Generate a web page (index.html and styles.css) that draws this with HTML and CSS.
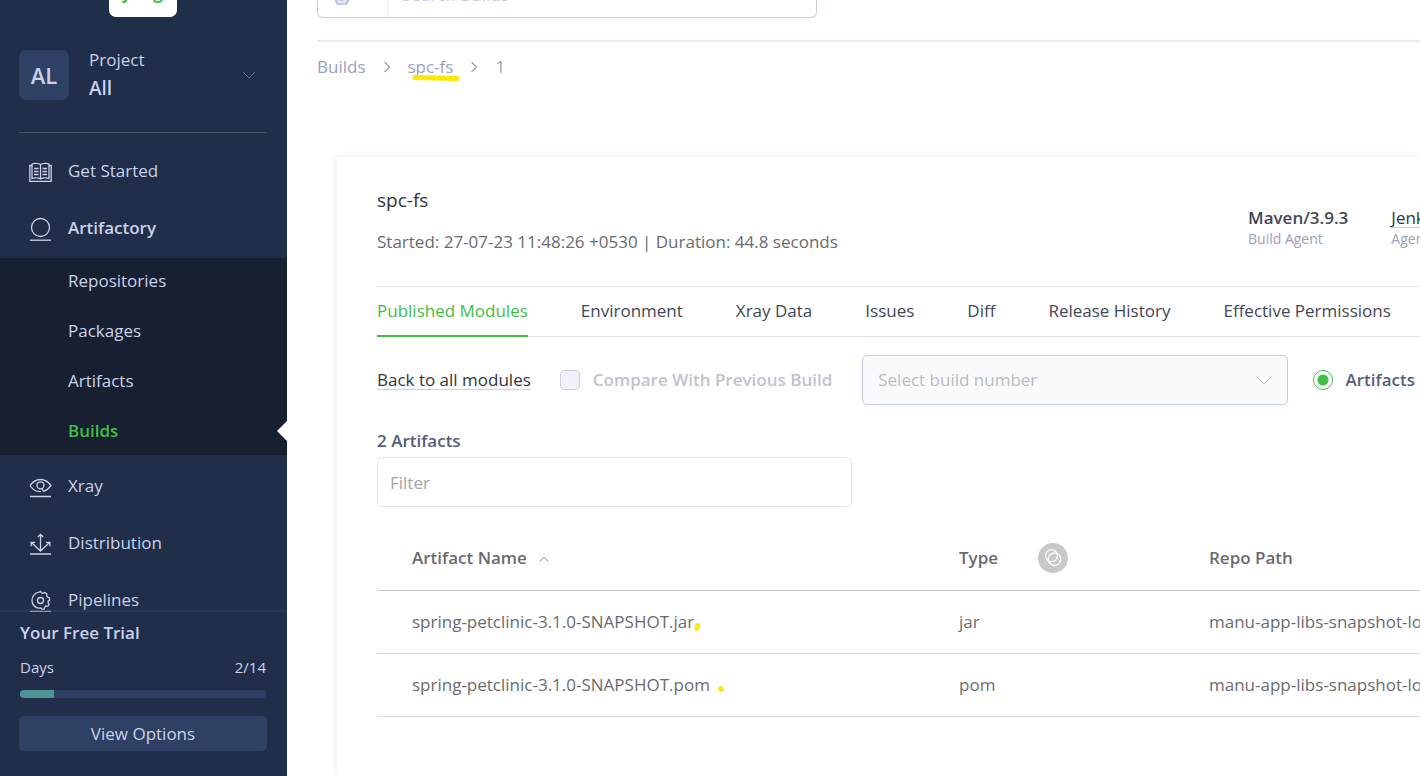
FILE: index.html
```html
<!DOCTYPE html>
<html lang="en">
<head>
<meta charset="utf-8">
<meta name="viewport" content="width=device-width, initial-scale=1">
<title>Builds - spc-fs</title>
<link rel="stylesheet" href="styles.css">
</head>
<body>
<div class="app">
  <aside class="sidebar">
    <div class="logo"><span class="logo-box">jfrog</span></div>
    <button class="project" type="button">
      <span class="avatar">AL</span>
      <span class="project-text"><span>Project</span><span class="project-name">All</span></span>
      <svg class="chevron" width="14" height="8" viewBox="0 0 14 8"><path d="M1 1l6 6 6-6"/></svg>
    </button>
    <nav class="nav">
      <a class="nav-item" href="#">
        <svg class="nav-icon" viewBox="0 0 24 24"><path d="M11.500 4.500C9.500 3 4.500 3 3 4v14.500c2-.8 6.500-.8 8.500.5 2-1.300 6.500-1.300 8.500-.5V4c-1.500-1-6.500-1-8.500.5zM11.500 4.500V19M3 5.500H.8v15.800h21.400V5.500H20M5 8.500H9.500M5 11.500H9.500M5 14.500H9.500M13.500 8.500H18M13.500 11.500H18M13.500 14.500H18"/></svg>
        Get Started</a>
      <a class="nav-item nav-item-open" href="#">
        <svg class="nav-icon" viewBox="0 0 24 24"><circle cx="11.500" cy="10.500" r="9"/><path d="M1 23.200h21"/></svg>
        Artifactory</a>
      <div class="subnav">
        <a class="subnav-item" href="#">Repositories</a>
        <a class="subnav-item" href="#">Packages</a>
        <a class="subnav-item" href="#">Artifacts</a>
        <a class="subnav-item subnav-item-active" href="#">Builds</a>
      </div>
      <a class="nav-item" href="#">
        <svg class="nav-icon" viewBox="0 0 24 24"><path d="M1 10.500C7 2.500 16 2.500 22 10.500 19 14.500 16.500 15.800 14.500 16.300M1 10.500C4 15 8 17 12 16.600M12.800 13.500l2 3.200M1 21.500h21"/><circle cx="11.500" cy="10.300" r="3.500"/></svg>
        Xray</a>
      <a class="nav-item" href="#">
        <svg class="nav-icon" viewBox="0 0 24 24"><path d="M11.500 2.500V19M8.800 5l2.700-2.700L14.200 5M2.500 10.500l9 8.500 9-8.500M2.200 14.200v-3.900h3.900M17 10.300h3.900v3.900M1 22h21"/></svg>
        Distribution</a>
      <a class="nav-item" href="#">
        <svg class="nav-icon" viewBox="0 0 24 24"><path d="M11.500 2.300l1 1.500 2 .4 1.600-.7 1.700 1.400-.2 1.800 1 1.500 1.900.7.100 2.200-1.500 1v1.800l1 1.500-1.200 1.700-1.900-.1-1.300 1.200-.4 1.700-2.200.3-1.200-1.200-2 .2C6 19 3 15.500 3 11.500c0-4.500 3-7.800 7-8.300zM1 22.500h21"/><circle cx="11.500" cy="11.500" r="3"/></svg>
        Pipelines</a>
    </nav>
    <section class="trial">
      <h2 class="trial-title">Your Free Trial</h2>
      <div class="trial-days"><span>Days</span><span>2/14</span></div>
      <div class="meter"><div class="meter-fill"></div></div>
      <button class="trial-button" type="button">View Options</button>
    </section>
  </aside>

  <main class="main">
    <div class="topbar">
      <div class="search">
        <span class="search-type"><svg width="18" height="18" viewBox="0 0 18 18"><path d="M5 1h8l4 8-4 8H5L1 9z"/><circle cx="9" cy="9" r="4"/></svg></span>
        <input class="search-input" type="text" placeholder="Search Builds" aria-label="Search Builds">
      </div>
    </div>
    <nav class="crumbs" aria-label="Breadcrumb">
      <a href="#">Builds</a>
      <svg class="crumb-sep" width="8" height="12" viewBox="0 0 8 12"><path d="M1.500 1l5 5-5 5"/></svg>
      <a class="crumb-marked" href="#">spc-fs<svg class="underline-mark" width="48" height="8" viewBox="0 0 48 8"><path d="M3 3.500l42 1"/></svg></a>
      <svg class="crumb-sep" width="8" height="12" viewBox="0 0 8 12"><path d="M1.500 1l5 5-5 5"/></svg>
      <span>1</span>
    </nav>

    <article class="card">
      <header class="build">
        <div class="build-info">
          <h1 class="build-name">spc-fs</h1>
          <p class="build-meta">Started: 27-07-23 11:48:26 +0530 | Duration: 44.8 seconds</p>
        </div>
        <div class="agents">
          <div><div class="agent-name">Maven/3.9.3</div><div class="agent-label">Build Agent</div></div>
          <div><a class="agent-link" href="#">Jenkins</a><div class="agent-label">Agent</div></div>
        </div>
      </header>
      <div class="tabs" role="tablist">
        <button class="tab tab-active" type="button" role="tab" aria-selected="true">Published Modules</button>
        <button class="tab" type="button" role="tab">Environment</button>
        <button class="tab" type="button" role="tab">Xray Data</button>
        <button class="tab" type="button" role="tab">Issues</button>
        <button class="tab" type="button" role="tab">Diff</button>
        <button class="tab" type="button" role="tab">Release History</button>
        <button class="tab" type="button" role="tab">Effective Permissions</button>
      </div>
      <div class="toolbar">
        <a class="back" href="#">Back to all modules</a>
        <label class="compare"><input class="checkbox" type="checkbox" disabled>Compare With Previous Build</label>
        <div class="select-wrap">
          <select class="select" aria-label="Build number" disabled><option>Select build number</option></select>
          <svg class="select-arrow" width="14" height="8" viewBox="0 0 14 8"><path d="M1 1l6 6 6-6"/></svg>
        </div>
        <label class="choice"><input class="radio" type="radio" name="view" checked>Artifacts</label>
      </div>
      <label class="count" for="filter">2 Artifacts</label>
      <input class="filter" id="filter" type="text" placeholder="Filter">
      <table class="table">
        <thead>
          <tr>
            <th class="col-name">Artifact Name<svg class="sort" width="10" height="6" viewBox="0 0 10 6"><path d="M1 5l4-3.500L9 5"/></svg></th>
            <th class="col-type">Type</th>
            <th class="col-xray"><svg class="xray-badge" width="30" height="30" viewBox="0 0 30 30"><circle class="badge-disc" cx="15" cy="15" r="15"/><circle cx="13.500" cy="12.700" r="6"/><circle cx="16.500" cy="16.200" r="6.300"/></svg></th>
            <th class="col-repo">Repo Path</th>
          </tr>
        </thead>
        <tbody>
          <tr>
            <td class="col-name">spring-petclinic-3.1.0-SNAPSHOT.jar<svg class="dot-mark" width="7" height="10" viewBox="0 0 7 10"><path d="M3.800 3.500L3 6"/></svg></td>
            <td>jar</td><td></td><td>manu-app-libs-snapshot-local</td>
          </tr>
          <tr>
            <td class="col-name">spring-petclinic-3.1.0-SNAPSHOT.pom<svg class="dot-mark dot-mark-far" width="7" height="10" viewBox="0 0 7 10"><circle cx="3" cy="4" r="2.800"/></svg></td>
            <td>pom</td><td></td><td>manu-app-libs-snapshot-local</td>
          </tr>
        </tbody>
      </table>
    </article>
  </main>
</div>
</body>
</html>
```
FILE: styles.css
```css
* { box-sizing: border-box; }
body {
  margin: 0;
  font: 17px/24px "Open Sans", "Noto Sans", sans-serif;
  color: #6b6b6f;
  background: #fff;
  overflow: hidden;
}
a { color: inherit; text-decoration: none; }
button, input, select { font: inherit; color: inherit; }
button { border: 0; background: none; padding: 0; cursor: pointer; }
svg { fill: none; stroke: currentColor; flex: none; }
h1, h2, p { margin: 0; font-weight: 400; }

.app { display: flex; height: 100vh; }

/* Sidebar */
.sidebar {
  flex: 0 0 287px;
  display: flex;
  flex-direction: column;
  background: #202e49;
  color: #cbd1e9;
}
.logo {
  display: flex;
  justify-content: center;
  align-items: flex-end;
  height: 17px;
  padding-right: 1px;
  overflow: hidden;
}
.logo-box {
  width: 68px;
  padding: 20px 0 12px;
  border-radius: 0 0 7px 7px;
  background: #fff;
  color: #40be46;
  font-weight: 700;
  text-align: center;
}
.project {
  display: flex;
  align-items: center;
  gap: 20px;
  margin: 0 20px 0 19px;
  padding: 29px 11px 28px 0;
  border-bottom: 1px solid #45546b;
  text-align: left;
}
.avatar {
  width: 50px;
  border-radius: 7px;
  background: #2e4164;
  font-size: 22px;
  font-weight: 600;
  line-height: 50px;
  text-align: center;
}
.project-text { display: flex; flex-direction: column; padding-bottom: 2px; line-height: 28px; }
.project-name { font-size: 19px; font-weight: 600; }
.chevron { margin-left: auto; color: #64728c; }
.nav { flex: 1; min-height: 0; padding-top: 9px; overflow: hidden; }
.nav-item {
  display: flex;
  align-items: center;
  gap: 15px;
  height: 57px;
  padding-left: 29px;
}
.nav-item-open { font-weight: 600; }
.nav-icon { width: 24px; height: 24px; margin-top: 2px; stroke-width: 1.3; }
.subnav {
  display: flex;
  flex-direction: column;
  gap: 26px;
  margin: 2px 0;
  padding: 11px 0 12px 68px;
  background: #162031;
}
.subnav-item { position: relative; }
.subnav-item-active { color: #40be46; font-weight: 600; }
.subnav-item-active::after {
  content: "";
  position: absolute;
  right: 0;
  top: 2px;
  border: 10px solid transparent;
  border-left: 0;
  border-right-color: #fff;
}
.trial {
  padding: 9px 20px 25px 19px;
  background: #202e49;
  box-shadow: 0 0 5px #3a4863;
  clip-path: inset(-5px 0 0 0);
}
.trial-title { padding: 0 1px; font-size: 17px; font-weight: 600; }
.trial-days { display: flex; justify-content: space-between; margin-top: 10px; padding: 0 1px; font-size: 15px; }
.meter { height: 8px; margin: 11px 1px 18px; border-radius: 4px; background: #2e4164; overflow: hidden; }
.meter-fill { width: 14%; height: 100%; background: #4d9494; }
.trial-button { width: 100%; border-radius: 5px; background: #2e4164; line-height: 35px; }

/* Main area */
.main { flex: 1; min-width: 0; display: flex; flex-direction: column; padding-left: 30px; overflow: hidden; }
.topbar { border-bottom: 2px solid #e7ebf8; padding-bottom: 22px; }
.search {
  display: flex;
  align-items: flex-end;
  width: 500px;
  height: 18px;
  border: 1px solid #c5cbe3;
  border-top: 0;
  border-radius: 0 0 6px 6px;
  overflow: hidden;
}
.search-type { display: flex; flex: 0 0 70px; padding: 0 0 12px 15px; color: #c5cbe3; border-right: 1px solid #eceef7; }
.search-type svg { stroke-width: 3; }
.search-input { flex: 1; height: 45px; padding: 0 14px; border: 0; background: none; }
.search-input::placeholder { color: #c5cbe3; opacity: 1; }
.crumbs { display: flex; align-items: center; gap: 17px; padding-top: 13px; color: #9ba1b9; }
.crumb-sep { stroke-width: 1.3; }
.crumb-marked { position: relative; }
.underline-mark { position: absolute; left: 4px; top: 19px; color: #ffe600; stroke-width: 5; stroke-linecap: round; }

.card {
  flex: 1;
  margin: 78px 0 0 20px;
  padding: 31px 0 0 40px;
  box-shadow: 0 0 8px #e8e9ee;
}
.build { display: flex; justify-content: space-between; height: 98px; }
.build-name { font-size: 19px; color: #33353c; }
.build-meta { margin-top: 18px; white-space: nowrap; }
.agents { flex: 0 0 172px; min-width: 0; display: flex; gap: 43px; padding-top: 18px; white-space: nowrap; }
.agent-name { font-weight: 600; color: #414857; }
.agent-link { color: #33353c; text-decoration: underline #cfcfcf; text-underline-offset: 3px; }
.agent-label { font-size: 14px; line-height: 18px; color: #9ba1b9; }
.tabs { display: flex; gap: 53px; border: solid #e2e3ef; border-width: 1px 0; color: #414857; }
.tab { height: 49px; padding-bottom: 1px; white-space: nowrap; }
.tab-active { color: #40be46; box-shadow: inset 0 -1px #40be46, 0 1px #40be46; }
.toolbar { display: flex; align-items: center; margin-top: 18px; white-space: nowrap; }
.back { color: #33353c; text-decoration: underline #cfcfcf; text-underline-offset: 3px; }
.compare, .choice { display: flex; align-items: center; gap: 13px; font-weight: 600; }
.compare { margin: 0 30px 0 29px; color: #c0c4cd; }
.choice { margin-left: 25px; padding-right: 5px; color: #565f76; }
.checkbox, .radio { appearance: none; flex: none; width: 20px; height: 20px; margin: 0; }
.checkbox { border: 1px solid #cbcfe6; border-radius: 4px; background: #f1f2f9; }
.radio { border: 1px solid #40be46; border-radius: 50%; background: radial-gradient(circle, #40be46 5px, #fff 6px); }
.select-wrap { position: relative; flex: 1; }
.select {
  appearance: none;
  width: 100%;
  height: 50px;
  padding: 0 15px;
  border: 1px solid #c5cbe3;
  border-radius: 5px;
  background: #f9fafc;
  color: #b9bcc4;
  opacity: 1;
}
.select-arrow { position: absolute; right: 17px; top: 22px; color: #c0c4cd; }
.count { display: block; margin-top: 24px; font-weight: 600; color: #565f76; }
.filter {
  display: block;
  width: 475px;
  height: 50px;
  margin-top: 4px;
  padding: 0 12px;
  border: 1px solid #e6e6e9;
  border-radius: 5px;
}
.filter::placeholder { color: #a4a4a6; opacity: 1; }
.table { width: 100%; margin-top: 20px; border-collapse: collapse; table-layout: fixed; white-space: nowrap; text-align: left; }
.table th, .table td { height: 63px; padding: 0; border-bottom: 1px solid #dcdcde; }
.table th { font-weight: 600; border-color: #c4c4c6; }
.table .col-name { padding-left: 35px; }
.col-type { width: 79px; }
.col-xray { width: 171px; }
.col-repo { width: 211px; }
.sort { margin-left: 12px; vertical-align: 2px; color: #8b8b90; }
.xray-badge { display: block; stroke: #fff; stroke-width: 1.3; }
.badge-disc { fill: #c8c8c8; stroke: none; }
.dot-mark { color: #ffe600; stroke-width: 5; stroke-linecap: round; vertical-align: -4px; }
.dot-mark circle { fill: currentColor; stroke: none; }
.dot-mark-far { margin-left: 8px; }
```
